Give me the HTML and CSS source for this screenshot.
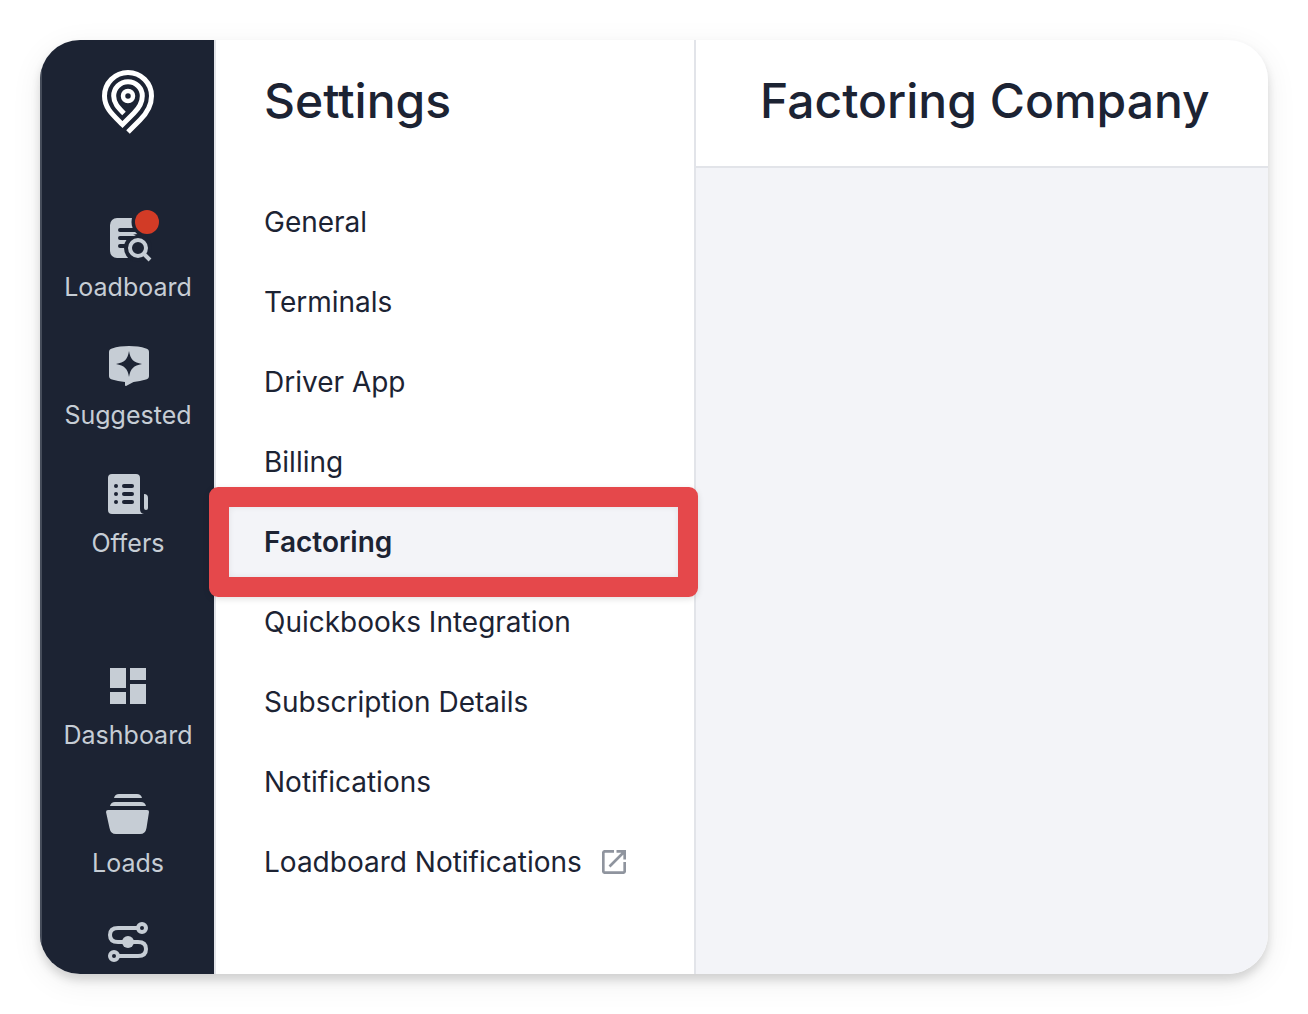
FILE: index.html
```html
<!DOCTYPE html>
<html lang="en">
<head>
  <meta charset="UTF-8" />
  <meta name="viewport" content="width=device-width, initial-scale=1.0" />
  <title>Settings - Factoring Company</title>
  <link rel="stylesheet" href="styles.css">
</head>
<body>
  <div class="window">
    <nav class="sidebar" aria-label="Main">
      <a href="#" class="logo" aria-label="Home">
        <svg width="52" height="64" viewBox="0 0 52 64" fill="none" stroke="#fff" stroke-width="5">
          <path d="M26 62L38 50C45 43 49.5 35 49.5 26A23.5 23.5 0 0 0 2.5 26C2.5 38 11 45 20.5 54.500L32 43C37 38 40.300 33 40.300 26A14.300 14.300 0 0 0 11.700 26C11.700 33 16 37.500 22 43.500" />
          <circle cx="26" cy="26" r="5" stroke-width="4.500" />
        </svg>
      </a>

      <div class="nav-group">
        <a href="#loadboard" class="nav-item">
          <span class="nav-icon">
            <svg width="48" height="48" viewBox="0 0 48 48">
              <rect x="6" y="2" width="32" height="40" rx="7" fill="#c6cdd5" />
              <path d="M16 14H38M16 22H38M16 30H38" stroke="#1c2333" stroke-width="4" stroke-linecap="round" />
              <circle cx="43" cy="6" r="15.500" fill="#1c2333" />
              <circle cx="34" cy="32" r="14" fill="#1c2333" />
              <path d="M26 18H27Q30 18.500 32 20H26Z" fill="#c6cdd5" />
              <circle cx="34" cy="32" r="8" fill="none" stroke="#c6cdd5" stroke-width="4" />
              <path d="M39.500 37.500L46 44" stroke="#c6cdd5" stroke-width="4" />
            </svg>
            <span class="badge"></span>
          </span>
          <span class="nav-label">Loadboard</span>
        </a>
        <a href="#suggested" class="nav-item">
          <span class="nav-icon">
            <svg width="48" height="48" viewBox="0 0 48 48" fill="#c6cdd5">
              <path d="M5 8C5 6 6 5 8 4.400C18 1.300 32 1.300 42 4.400C44 5 45 6 45 8V32C45 34 44 35 42 35.600C38 36.900 34 37.500 29.500 38L22.500 41.800C21.600 42.200 21 42 21 41V38C16 37.600 12 36.900 8 35.600C6 35 5 34 5 32Z" />
              <path d="M25 7C26.500 15.500 29.500 18.500 38 20C29.500 21.500 26.500 24.500 25 33C23.500 24.500 20.500 21.500 12 20C20.500 18.500 23.500 15.500 25 7Z" fill="#1c2333" />
            </svg>
          </span>
          <span class="nav-label">Suggested</span>
        </a>
        <a href="#offers" class="nav-item">
          <span class="nav-icon">
            <svg width="48" height="48" viewBox="0 0 48 48" fill="#c6cdd5">
              <path d="M8 2H32Q36 2 36 6V37Q36 41.500 40 42H8Q4 42 4 38V6Q4 2 8 2Z" />
              <path d="M40 22Q44 22 44 26V36Q44 38 42 38T40 36Z" />
              <g fill="#1c2333">
                <circle cx="12" cy="14" r="2" />
                <circle cx="12" cy="22" r="2" />
                <circle cx="12" cy="30" r="2" />
                <rect x="18" y="12" width="12" height="4" rx="2" />
                <rect x="18" y="20" width="12" height="4" rx="2" />
                <rect x="18" y="28" width="12" height="4" rx="2" />
              </g>
            </svg>
          </span>
          <span class="nav-label">Offers</span>
        </a>
      </div>

      <div class="nav-group">
        <a href="#dashboard" class="nav-item">
          <span class="nav-icon">
            <svg width="48" height="48" viewBox="0 0 48 48" fill="#c6cdd5">
              <path d="M6 4H22V24H6ZM6 28H22V40H6ZM26 4H42V16H26ZM26 20H42V40H26Z" />
            </svg>
          </span>
          <span class="nav-label">Dashboard</span>
        </a>
        <a href="#loads" class="nav-item">
          <span class="nav-icon">
            <svg width="48" height="48" viewBox="0 0 48 48" fill="#c6cdd5">
              <path d="M10 6Q11 2 15 2H33Q37 2 38 6ZM6 14Q7 10 11 10H37Q41 10 42 14Z" />
              <path d="M4 18H43Q45.300 18 45 20L42.500 36Q41.500 42 36 42H12Q6.500 42 5.500 36L2 20Q2 18 4 18Z" />
            </svg>
          </span>
          <span class="nav-label">Loads</span>
        </a>
        <a href="#routes" class="nav-item" aria-label="Routes">
          <span class="nav-icon">
            <svg width="48" height="48" viewBox="0 0 48 48" fill="none" stroke="#c6cdd5" stroke-width="4">
              <path d="M34 8H14Q6 8 6 15T14 22H34Q42 22 42 29T34 36H14" />
              <circle cx="38" cy="8" r="4" />
              <circle cx="10" cy="36" r="4" />
              <circle cx="24" cy="22" r="6" fill="#c6cdd5" stroke="none" />
            </svg>
          </span>
        </a>
      </div>
    </nav>

    <aside class="settings">
      <h2>Settings</h2>
      <ul class="menu">
        <li><a href="#general">General</a></li>
        <li><a href="#terminals">Terminals</a></li>
        <li><a href="#driver-app">Driver App</a></li>
        <li><a href="#billing">Billing</a></li>
        <li><a href="#factoring" class="active" aria-current="page">Factoring</a></li>
        <li><a href="#quickbooks">Quickbooks Integration</a></li>
        <li><a href="#subscription">Subscription Details</a></li>
        <li><a href="#notifications">Notifications</a></li>
        <li>
          <a href="#loadboard-notifications">
            Loadboard Notifications
            <svg width="24" height="24" viewBox="0 0 24 24" fill="none" stroke="#8f949e" stroke-width="2.700">
              <path d="M12 1.300H3Q1.300 1.300 1.300 3V21Q1.300 22.700 3 22.700H21Q22.700 22.700 22.700 21V12" />
              <path d="M14.500 1.300H22.700V9.500M22 2L7.500 16.500" />
            </svg>
          </a>
        </li>
      </ul>
    </aside>

    <main class="content">
      <header>
        <h1>Factoring Company</h1>
      </header>
    </main>
  </div>
</body>
</html>
```
FILE: styles.css
```css
* {
  box-sizing: border-box;
}

body {
  background-color: #fff;
  color: #1c2333;
  font-family: Inter, sans-serif;
  margin: 0;
  padding: 40px;
  height: 100vh;
}

a {
  color: inherit;
  text-decoration: none;
}

svg {
  display: block;
  flex-shrink: 0;
}

h1, h2 {
  font-size: 48px;
  font-weight: 500;
  line-height: 62px;
  margin: 0;
  white-space: nowrap;
}

.window {
  display: flex;
  height: 100%;
  border-radius: 40px;
  overflow: hidden;
  box-shadow: 0 6px 10px rgba(0, 0, 0, 0.14), 0 8px 32px rgba(0, 0, 0, 0.07);
}

/* sidebar */
.sidebar {
  display: flex;
  flex-direction: column;
  flex-shrink: 0;
  width: 174px;
  padding-top: 30px;
  background-color: #1c2333;
  border-left: 2px solid #454c5a;
  overflow: hidden;
}

.logo {
  align-self: center;
}

.nav-group {
  display: flex;
  flex-direction: column;
  gap: 42px;
  margin-top: 82px;
}

.nav-group + .nav-group {
  margin-top: 106px;
}

.nav-item {
  display: flex;
  flex-direction: column;
  align-items: center;
  gap: 8px;
  color: #c6cdd5;
}

.nav-icon {
  position: relative;
}

.nav-label {
  font-size: 25px;
  line-height: 30px;
}

.badge {
  position: absolute;
  top: -6px;
  right: -7px;
  width: 24px;
  height: 24px;
  border-radius: 50%;
  background-color: #d23b26;
}

/* settings menu */
.settings {
  flex: 0 0 482px;
  border: solid #e2e4e9;
  border-width: 0 2px;
  background-color: #fff;
}

.settings h2 {
  padding: 30px 48px 0;
}

.menu {
  list-style: none;
  margin: 50px 0 0;
  padding: 0;
}

.menu a {
  position: relative;
  display: flex;
  align-items: center;
  gap: 20px;
  height: 80px;
  padding: 0 48px;
  font-size: 28px;
  white-space: nowrap;
}

.menu .active {
  background-color: #f3f4f8;
  font-weight: 600;
}

/* red frame round the selected item */
.menu .active::after {
  content: "";
  position: absolute;
  inset: -15px -4px -15px -7px;
  z-index: 1;
  border: 20px solid #e5484b;
  border-radius: 9px;
  box-shadow: 0 2px 6px rgba(0, 0, 0, 0.12), inset 0 0 6px rgba(0, 0, 0, 0.08);
}

/* page content */
.content {
  flex: 1;
  min-width: 0;
  background-color: #f3f4f8;
}

.content header {
  padding: 30px 64px 34px;
  background-color: #fff;
  border-bottom: 2px solid #e2e4e9;
}
```
